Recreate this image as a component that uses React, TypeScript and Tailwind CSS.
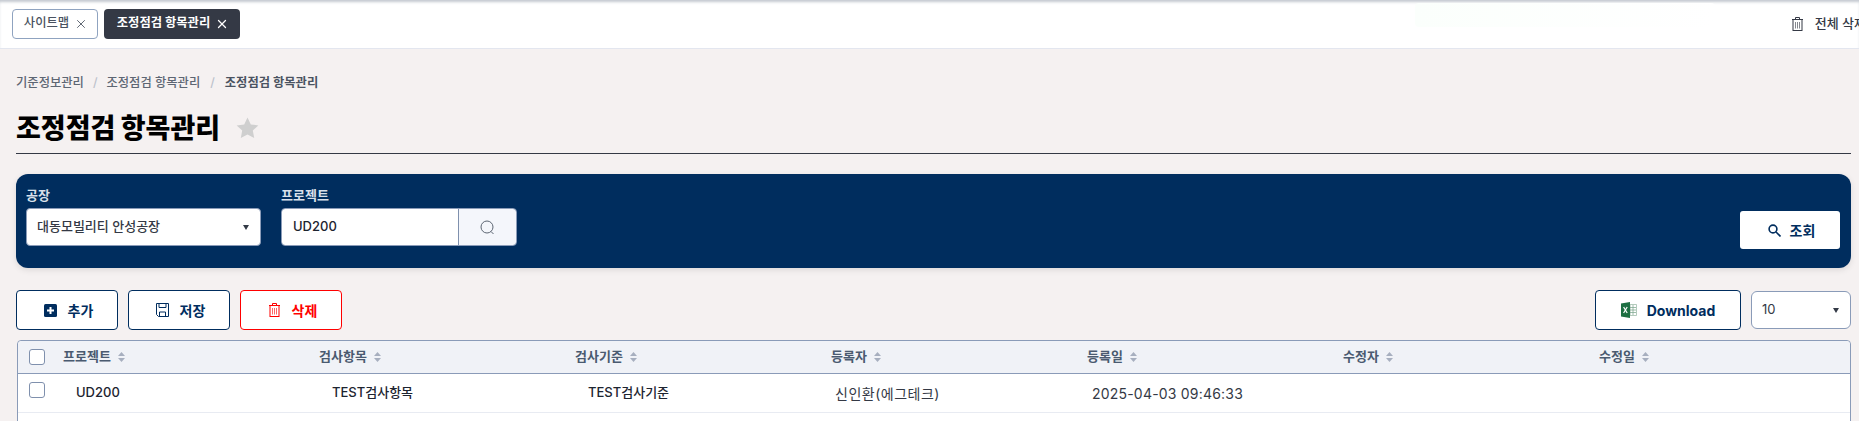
import { X } from "lucide-react"

const FONT = "font-['Inter','Noto_Sans_CJK_KR',sans-serif]"

const headers = ["프로젝트", "검사항목", "검사기준", "등록자", "등록일", "수정자", "수정일"]

function SortIcon() {
    return (
        <svg width="9" height="12" viewBox="0 0 9 12" className="ml-[6px] text-[#a7afbf]" fill="currentColor">
            <path d="M4.5 1 8 5H1z" />
            <path d="M4.5 11 1 7h7z" />
        </svg>
    )
}

function Caret() {
    return (
        <svg width="6" height="5" viewBox="0 0 6 5" fill="#333a46">
            <path d="M0 0h6L3 5z" />
        </svg>
    )
}

function TrashIcon({ className }: { className: string }) {
    return (
        <svg width="11" height="14" viewBox="0 0 11 14" fill="none" stroke="currentColor" strokeWidth="1" className={className}>
            <path d="M0 2.5h11M3.5 2.5V.5h4v2" />
            <rect x="1" y="2.5" width="9" height="11" />
            <path d="M3.5 5v6.5M5.5 5v6.5M7.5 5v6.5" strokeOpacity="0.6" />
        </svg>
    )
}

function Checkbox() {
    return <span className="block w-[16px] h-[16px] bg-white border border-[#7f90ad] rounded-[3px]" />
}

export default function App() {
    return (
        <div className={`${FONT} w-[1859px] h-[421px] overflow-hidden bg-[#f5f1f1]`}>
            {/* Tab bar */}
            <div className="relative h-[49px] bg-white border-b border-[#e3e6ef] flex items-center pl-[12px] shadow-[inset_0_3px_3px_-1px_#c3c8d0]">
                <div className="absolute left-[1415px] top-[3px] w-[300px] h-[24px] rounded-[4px] bg-gradient-to-r from-[#fbfffc] to-white" />
                <div className="relative flex gap-[6px] -mt-[1px]">
                    <div className="h-[30px] w-[86px] flex items-center justify-center gap-[5px] pl-[2px] bg-white border border-[#8fa3c0] rounded-[4px] text-[12.3px] font-medium text-[#4a5361]">
                        사이트맵
                        <X size={14} strokeWidth={1.5} />
                    </div>
                    <div className="h-[30px] w-[136px] flex items-center justify-center gap-[5px] pl-[2px] bg-[#343945] rounded-[4px] text-[12.3px] font-bold text-white">
                        조정점검 항목관리
                        <X size={14} strokeWidth={2.25} />
                    </div>
                </div>
                <div className="relative ml-auto -mr-[7px] flex items-center shrink-0 gap-[12px] text-[13px] text-[#343945] font-medium whitespace-nowrap">
                    <TrashIcon className="text-[#343945]" />
                    전체 삭제
                </div>
            </div>

            {/* Content */}
            <div className="pl-[16px] pr-[8px]">
                <div className="flex items-center h-[18px] mt-[25px] text-[12.3px] font-medium text-[#5d6673]">
                    <span>기준정보관리</span>
                    <span className="mx-[9px] text-[#bcc2cc]">/</span>
                    <span>조정점검 항목관리</span>
                    <span className="mx-[10px] text-[#bcc2cc]">/</span>
                    <span className="font-bold text-[#4a5361]">조정점검 항목관리</span>
                </div>

                <div className="flex items-center h-[36px] mt-[18px]">
                    <h1 className="text-[27px] font-black text-black leading-none">조정점검 항목관리</h1>
                    <svg width="23" height="22" viewBox="1 1 22 22" fill="#cfcfcf" className="ml-[16px]">
                        <path d="M12 1.5l3.3 6.9 7.5 1-5.5 5.2 1.4 7.5L12 18.5l-6.7 3.6 1.4-7.5L1.2 9.4l7.5-1z" />
                    </svg>
                </div>
                <div className="h-[1px] bg-[#343945] mt-[7px]" />

                {/* Search panel */}
                <div className="flex items-start h-[94px] mt-[20px] bg-[#002d5e] rounded-[12px] pl-[10px] pr-[11px] shadow-[0_2px_6px_rgba(0,0,0,0.1)]">
                    <div className="w-[235px] mt-[13px]">
                        <div className="h-[18px] flex items-center text-[13px] font-bold text-[#d9e0ea]">공장</div>
                        <div className="flex items-center justify-between h-[38px] mt-[3px] bg-white border border-[#8a9bb8] rounded-[4px] pl-[10px] pr-[11px] text-[13px] font-medium text-[#343945]">
                            대동모빌리티 안성공장
                            <Caret />
                        </div>
                    </div>
                    <div className="w-[236px] ml-[20px] mt-[13px]">
                        <div className="h-[18px] flex items-center text-[13px] font-bold text-[#d9e0ea]">프로젝트</div>
                        <div className="flex h-[38px] mt-[3px] border border-[#8a9bb8] rounded-[4px] overflow-hidden text-[13px] font-medium text-[#1d2430]">
                            <div className="flex-1 flex items-center bg-white pl-[11px]">UD200</div>
                            <div className="w-[58px] flex items-center justify-center bg-[#f4f6fb] border-l border-[#7f90ad]">
                                <svg width="15" height="15" viewBox="0 0 15 15" fill="none" stroke="#5d6673" strokeWidth="1">
                                    <circle cx="7" cy="7" r="6" />
                                    <path d="M11 11.5l2.5 2.5" />
                                </svg>
                            </div>
                        </div>
                    </div>
                    <div className="ml-auto mt-[37px] w-[100px] h-[38px] flex items-center justify-center gap-[9px] pl-[3px] bg-white rounded-[3px] text-[14px] font-bold text-[#002d5e]">
                        <svg width="13" height="13" viewBox="0 0 13 13" fill="none" stroke="#002d5e" strokeWidth="1.6">
                            <circle cx="5" cy="5" r="3.9" />
                            <path d="M8 8l4.5 4.5" />
                        </svg>
                        조회
                    </div>
                </div>

                {/* Actions */}
                <div className="flex items-center h-[40px] mt-[22px]">
                    <div className="flex gap-[10px]">
                        <button className="w-[102px] h-[40px] flex items-center justify-center gap-[11px] pl-[3px] bg-white border border-[#002d5e] rounded-[4px] text-[14px] font-bold text-[#002d5e]">
                            <svg width="13" height="13" viewBox="0 0 13 13">
                                <rect width="13" height="13" rx="1.5" fill="#002d5e" />
                                <path d="M6.5 3v7M3 6.5h7" stroke="#fff" strokeWidth="2" />
                            </svg>
                            추가
                        </button>
                        <button className="w-[102px] h-[40px] flex items-center justify-center gap-[11px] pl-[3px] bg-white border border-[#002d5e] rounded-[4px] text-[14px] font-bold text-[#002d5e]">
                            <svg width="13" height="14" viewBox="0 0 13 14" fill="none" stroke="#002d5e" strokeWidth="1">
                                <path d="M.5.5h12v13H2.5L.5 11.5z" />
                                <path d="M3 .5v4h7v-4M3.5 13.5V9h6v4.5" />
                            </svg>
                            저장
                        </button>
                        <button className="w-[102px] h-[40px] flex items-center justify-center gap-[12px] pl-[4px] bg-white border border-[#ff0000] rounded-[4px] text-[14px] font-bold text-[#ff0000]">
                            <TrashIcon className="text-[#ff0000]" />
                            삭제
                        </button>
                    </div>
                    <button className="ml-auto w-[146px] h-[40px] flex items-center justify-center gap-[10px] bg-white border border-[#002d5e] rounded-[4px] text-[14px] font-bold text-[#002d5e]">
                        <svg width="16" height="16" viewBox="0 0 16 16">
                            <path d="M6 2.5h9.5v11H6z" fill="#fff" stroke="#9ab8a5" strokeWidth="0.75" />
                            <path d="M9 3v10M12 3v10M6 5.5h9M6 8h9M6 10.5h9" stroke="#7ea78f" strokeWidth="0.75" />
                            <path d="M0 1.6 9 0v16l-9-1.6z" fill="#1d6f42" />
                            <path d="M2.6 5 6.2 11M6.2 5 2.6 11" stroke="#fff" strokeWidth="1.2" />
                        </svg>
                        Download
                    </button>
                    <div className="ml-[10px] w-[100px] h-[38px] flex items-center justify-between bg-white border border-[#8a9bb8] rounded-[6px] pl-[10px] pr-[11px] text-[13px] text-[#343945]">
                        10
                        <Caret />
                    </div>
                </div>

                {/* Table, runs past the bottom of the window */}
                <div className="h-[120px] mt-[10px] ml-[1px] bg-white border border-[#8a9bb8] rounded-t-[4px]">
                    <div className="flex items-center h-[33px] bg-[#f0f2f7] border-b border-[#8a9bb8] rounded-t-[4px]">
                        <div className="w-[36px] pl-[11px]">
                            <Checkbox />
                        </div>
                        {headers.map((h) => (
                            <div key={h} className="w-[256px] pl-[9px] flex items-center text-[13px] font-bold text-[#4a5a70]">
                                {h}
                                <SortIcon />
                            </div>
                        ))}
                    </div>
                    <div className="flex items-center h-[39px] border-b border-[#e8ebf2] text-[13px] font-medium text-[#1d2430]">
                        <div className="w-[36px] pl-[11px] -mt-[6px]">
                            <Checkbox />
                        </div>
                        <div className="w-[256px] pl-[22px]">UD200</div>
                        <div className="w-[256px] pl-[22px]">TEST검사항목</div>
                        <div className="w-[256px] pl-[22px]">TEST검사기준</div>
                        <div className="w-[256px] pl-[13px] text-[14px] font-normal tracking-[0.5px] text-[#343945]">신인환(에그테크)</div>
                        <div className="w-[256px] pl-[14px] text-[14px] font-normal tracking-[0.2px] text-[#343945]">2025-04-03 09:46:33</div>
                    </div>
                </div>
            </div>
        </div>
    )
}
